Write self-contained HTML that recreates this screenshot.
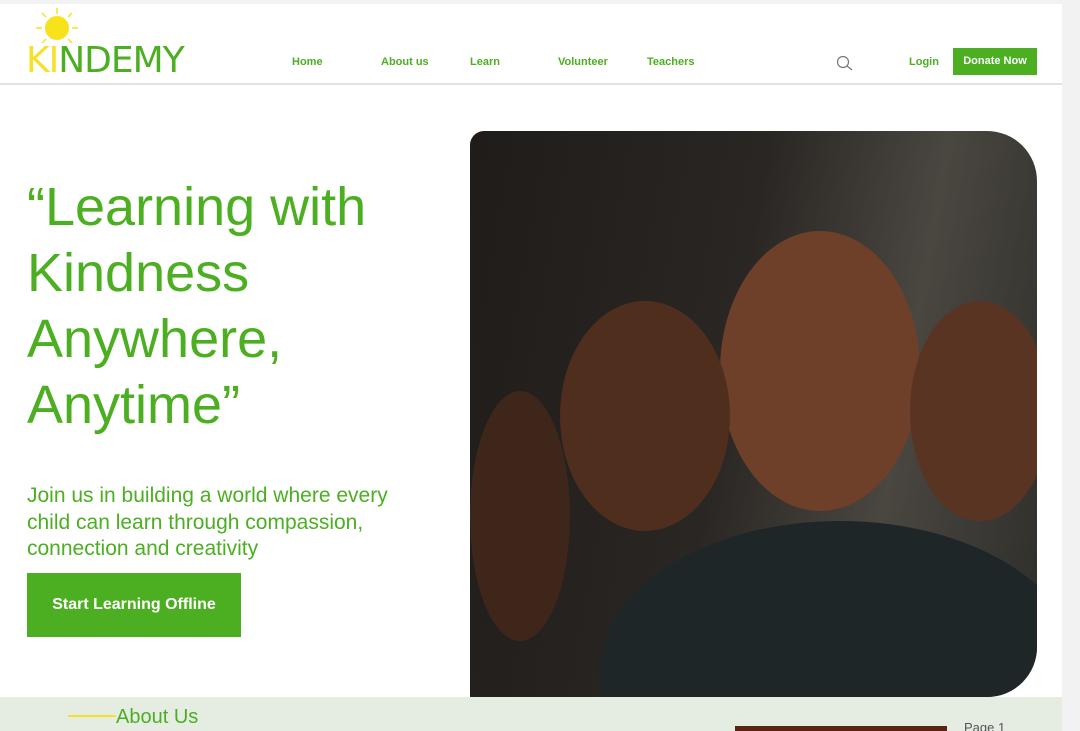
<!DOCTYPE html>
<html style="overflow:hidden"><head><style>
*{margin:0;padding:0;box-sizing:border-box}
html,body{width:1080px;height:731px;overflow:hidden}
body{background:#f2f2f2;font-family:"Liberation Sans",Arial,sans-serif;position:relative}
.page{position:absolute;left:0;top:4px;width:1062px;height:727px;background:#fff;overflow:hidden}
.hdr{position:absolute;left:0;top:0;width:1062px;height:81px;border-bottom:2px solid #e2e2e2}
.logo{position:absolute;left:26px;top:36px;font-family:"DejaVu Sans",sans-serif;font-size:36px;color:#4caf22;letter-spacing:-1px}
.logo span{color:#f6e02a}
.nav a{position:absolute;top:52px;font-size:11px;font-weight:bold;color:#4caf22;text-decoration:none}
.don{position:absolute;left:953px;top:44px;width:84px;height:27px;background:#4caf22;color:#fff;font-size:11px;font-weight:bold;text-align:center;line-height:27px}
h1{position:absolute;left:27px;top:170px;font-weight:normal;font-size:54px;line-height:66px;color:#4caf22}
.sub{position:absolute;left:27px;top:479px;font-size:21px;line-height:26.5px;color:#4caf22;width:395px}
.btn{position:absolute;left:27px;top:569px;width:214px;height:64px;background:#4caf22;color:#fff;font-size:16px;font-weight:bold;line-height:64px;text-align:center}
.photo{position:absolute;left:470px;top:127px;width:567px;height:566px;border-radius:14px 50px 50px 0;overflow:hidden;background:linear-gradient(100deg,#1f1c1a 0%,#2a2623 45%,#4a4640 72%,#2e2e2a 100%)}
.b{position:absolute;border-radius:50%}
.about{position:absolute;left:0;top:693px;width:1062px;height:34px;background:#e5ece2}
</style></head><body>
<div class="page">
<div class="hdr">
<svg style="position:absolute;left:34px;top:2px" width="46" height="44"><g stroke="#f6e02a" stroke-width="1.5"><line x1="23" y1="2" x2="23" y2="8"/><line x1="2" y1="22" x2="8" y2="22"/><line x1="38" y1="22" x2="44" y2="22"/><line x1="8" y1="7" x2="12" y2="11"/><line x1="38" y1="7" x2="34" y2="11"/><line x1="8" y1="37" x2="12" y2="33"/><line x1="38" y1="37" x2="34" y2="33"/></g><circle cx="23" cy="22" r="12" fill="#f8e21c"/></svg>
<div class="logo"><span>KI</span>NDEMY</div>
<div class="nav"><a style="left:292px">Home</a><a style="left:381px">About us</a><a style="left:470px">Learn</a><a style="left:558px">Volunteer</a><a style="left:647px">Teachers</a><a style="left:909px">Login</a></div>
<svg style="position:absolute;left:836px;top:51px" width="18" height="16"><circle cx="7" cy="7" r="5.5" fill="none" stroke="#777" stroke-width="1.2"/><line x1="11" y1="11" x2="16" y2="15" stroke="#777" stroke-width="1.2"/></svg>
<div class="don">Donate Now</div>
</div>
<h1>“Learning with<br>Kindness<br>Anywhere,<br>Anytime”</h1>
<div class="sub">Join us in building a world where every child can learn through compassion, connection and creativity</div>
<div class="btn">Start Learning Offline</div>
<div class="photo">
<div class="b" style="left:250px;top:100px;width:200px;height:280px;background:#6e4029"></div>
<div class="b" style="left:90px;top:170px;width:170px;height:230px;background:#4f2e1e"></div>
<div class="b" style="left:440px;top:170px;width:140px;height:220px;background:#5a3422"></div>
<div class="b" style="left:0px;top:260px;width:100px;height:250px;background:#3e261a"></div>
<div class="b" style="left:130px;top:390px;width:480px;height:300px;background:#1e2628"></div>
</div>
<div class="about">
<div style="position:absolute;left:68px;top:18px;width:48px;height:2px;background:#f6e02a"></div>
<div style="position:absolute;left:116px;top:9px;font-size:20px;color:#4caf22">About Us</div>
<div style="position:absolute;left:735px;top:29px;width:212px;height:5px;background:#5a2412"></div>
<div style="position:absolute;left:964px;top:23px;font-size:13px;color:#555">Page 1</div>
</div>
</div>
</body></html>
